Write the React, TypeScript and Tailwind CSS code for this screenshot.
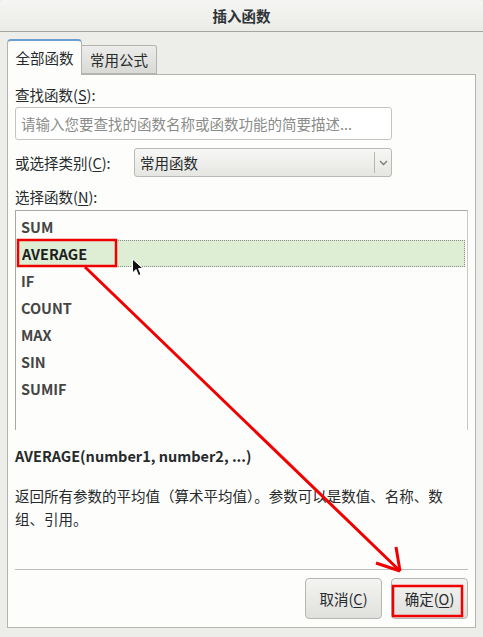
import React from "react";

const FONT = { fontFamily: '"Noto Sans CJK SC", "Noto Sans", sans-serif' };

const functions = ["SUM", "AVERAGE", "IF", "COUNT", "MAX", "SIN", "SUMIF"];

function Mnemonic({ label, k }: { label: string; k: string }) {
    return (
        <span>
            {label}(<span className="underline underline-offset-2">{k}</span>)
        </span>
    );
}

export default function App() {
    return (
        <div
            className="relative w-[483px] h-[637px] bg-[#edeeea] flex flex-col text-[#262a2b] overflow-hidden"
            style={FONT}
        >
            {/* title bar */}
            <div className="h-[32px] shrink-0 flex items-center justify-center bg-gradient-to-b from-[#f5f5f3] to-[#ebebe8] border-b border-[#a4a5a2] rounded-t-[4px]">
                <span className="text-[14.5px] font-bold text-[#2e3436]">插入函数</span>
            </div>

            <div className="flex flex-col px-[7px] pt-[7px]">
                {/* tabs */}
                <div className="flex items-end h-[35px]">
                    <div className="relative z-10 -mb-px h-[36px] w-[75px] flex items-center justify-center bg-[#fdfdfb] border border-[#b3b3b0] border-b-0 border-t-2 border-t-[#6a9fd4] rounded-t-[4px] text-[14.5px]">
                        全部函数
                    </div>
                    <div className="h-[29px] w-[75px] flex items-center justify-center bg-gradient-to-b from-[#ececea] to-[#d9d9d6] border border-[#b3b3b0] border-l-0 rounded-tr-[3px] text-[14.5px]">
                        常用公式
                    </div>
                </div>

                {/* panel */}
                <div className="h-[554px] flex flex-col bg-[#fdfdfb] border border-[#b3b3b0] pl-[7px] pr-[6px] pb-[8px]">
                    <div className="mt-[10px] h-[20px] flex items-center text-[14.5px]">
                        <Mnemonic label="查找函数" k="S" />:
                    </div>
                    <div className="mt-[2px] w-[377px] h-[33px] flex items-center px-[5px] bg-white border border-[#c4c4c1] rounded-[3px] text-[14.5px] text-[#8a8c88]">
                        请输入您要查找的函数名称或函数功能的简要描述...
                    </div>

                    <div className="mt-[8px] flex items-center h-[29px]">
                        <div className="w-[119px] text-[14.5px]">
                            <Mnemonic label="或选择类别" k="C" />:
                        </div>
                        <div className="w-[258px] h-[29px] flex items-center bg-gradient-to-b from-[#f7f7f5] to-[#e5e5e2] border border-[#b9b9b6] rounded-[3px]">
                            <span className="flex-1 pl-[5px] text-[14.5px]">常用函数</span>
                            <div className="w-[17px] h-[21px] border-l border-[#b5b5b2] flex items-center justify-center">
                                <svg width="9" height="6" viewBox="0 0 9 6">
                                    <path d="M1 1 L4.5 4.5 L8 1" fill="none" stroke="#7d7f7b" strokeWidth="1.4" />
                                </svg>
                            </div>
                        </div>
                    </div>

                    <div className="mt-[10px] h-[20px] flex items-center text-[14.5px]">
                        <Mnemonic label="选择函数" k="N" />:
                    </div>

                    {/* list */}
                    <div className="mt-[3px] w-[453px] h-[220px] bg-[#fdfdfb] border-t border-l border-r border-t-[#a8a8a5] border-l-[#a8a8a5] border-r-[#c8c8c5] pt-[2px]">
                        {functions.map((fn) => (
                            <div
                                key={fn}
                                className={`h-[27px] flex items-center text-[14.5px] font-semibold ${
                                    fn === "AVERAGE"
                                        ? "mx-[2px] pl-[3px] bg-[#ddeed4] border border-dotted border-[#8a8a88] text-[#1e1e1e]"
                                        : "pl-[5px] text-[#454545]"
                                }`}
                            >
                                {fn}
                            </div>
                        ))}
                    </div>

                    <div className="mt-[16px] h-[20px] flex items-center text-[14.5px] font-bold">
                        AVERAGE(number1, number2, ...)
                    </div>
                    <p className="mt-[18px] w-[452px] text-[14.5px] leading-[23px]">
                        返回所有参数的平均值（算术平均值）。参数可以是数值、名称、数组、引用。
                    </p>

                    <div className="mt-auto w-[453px] border-t border-[#bdbdba]" />
                    <div className="mt-[8px] flex justify-end gap-[9px] pr-[1px]">
                        <button className="w-[77px] h-[41px] flex items-center justify-center bg-gradient-to-b from-[#f4f4f2] to-[#e0e0dd] border border-[#b5b5b2] rounded-[4px] text-[14.5px]">
                            <Mnemonic label="取消" k="C" />
                        </button>
                        <button className="w-[77px] h-[41px] flex items-center justify-center bg-gradient-to-b from-[#f4f4f2] to-[#e0e0dd] border border-[#b5b5b2] rounded-[4px] text-[14.5px]">
                            <Mnemonic label="确定" k="O" />
                        </button>
                    </div>
                </div>
            </div>

            {/* mouse cursor */}
            <svg className="absolute left-[131px] top-[258px]" width="14" height="20" viewBox="0 0 14 20">
                <path
                    d="M1.5 1 L1.5 15 L5 11.5 L7.5 17.5 L10 16.5 L7.5 10.5 L12 10.5 Z"
                    fill="#111"
                    stroke="#fff"
                    strokeWidth="1"
                    strokeLinejoin="round"
                />
            </svg>

            {/* red annotations */}
            <svg className="absolute inset-0 pointer-events-none" width="483" height="637" viewBox="0 0 483 637">
                <rect x="18" y="240" width="98" height="26" fill="none" stroke="#f00000" strokeWidth="2.5" />
                <line x1="85" y1="267" x2="400" y2="571" stroke="#f00000" strokeWidth="3" />
                <line x1="400" y1="571" x2="376" y2="563" stroke="#f00000" strokeWidth="3" />
                <line x1="400" y1="571" x2="396" y2="547" stroke="#f00000" strokeWidth="3" />
                <rect x="393" y="586" width="69" height="30" fill="none" stroke="#f00000" strokeWidth="2.5" />
            </svg>
        </div>
    );
}
